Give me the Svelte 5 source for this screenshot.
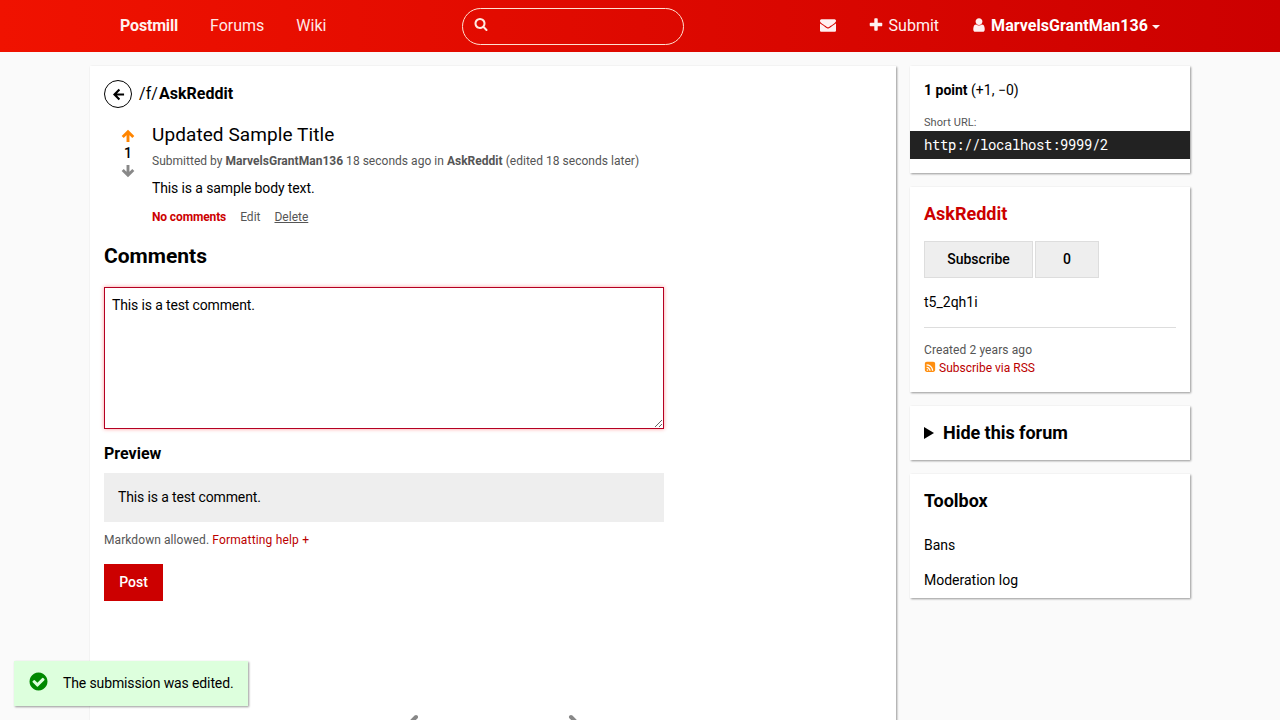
<script>
  const paths = {
    envelope: 'M1792 710v794q0 66-47 113t-113 47h-1472q-66 0-113-47t-47-113v-794q44 49 101 87 362 246 497 345 57 42 92.5 65.5t94.5 48 110 24.5h2q51 0 110-24.5t94.5-48 92.5-65.5q170-123 498-345 57-39 100-87zm0-294q0 79-49 151t-122 123q-376 261-468 325-10 7-42.5 31t-54 38.5-52 32.5-57.5 27-50 9h-2q-23 0-50-9t-57.5-27-52-32.5-54-38.5-42.5-31q-91-64-262-182.5t-205-142.5q-62-42-117-115.5t-55-136.5q0-78 41.5-130t118.5-52h1472q65 0 112.5 47t47.5 113z',
    plus: 'M1600 736v192q0 40-28 68t-68 28h-416v416q0 40-28 68t-68 28h-192q-40 0-68-28t-28-68v-416h-416q-40 0-68-28t-28-68v-192q0-40 28-68t68-28h416v-416q0-40 28-68t68-28h192q40 0 68 28t28 68v416h416q40 0 68 28t28 68z',
    user: 'M1536 1399q0 109-62.5 187t-150.5 78h-854q-88 0-150.5-78t-62.5-187q0-85 8.5-160.5t31.5-152 58.5-131 94-89 134.5-34.5q131 128 313 128t313-128q76 0 134.5 34.5t94 89 58.5 131 31.5 152 8.5 160.5zm-256-887q0 159-112.5 271.5t-271.5 112.5-271.5-112.5-112.5-271.5 112.5-271.5 271.5-112.5 271.5 112.5 112.5 271.5z',
    search: 'M1216 832q0-185-131.5-316.5t-316.5-131.5-316.5 131.5-131.5 316.5 131.5 316.5 316.5 131.5 316.5-131.5 131.5-316.5zm512 832q0 52-38 90t-90 38q-54 0-90-38l-343-342q-179 124-399 124-143 0-273.5-55.5t-225-150-150-225-55.5-273.5 55.5-273.5 150-225 225-150 273.5-55.5 273.5 55.5 225 150 150 225 55.5 273.5q0 220-124 399l343 343q37 37 37 90z',
    check: 'M1412 734q0-28-18-46l-91-90q-19-19-45-19t-45 19l-408 407-226-226q-19-19-45-19t-45 19l-91 90q-18 18-18 46 0 27 18 45l362 362q19 19 45 19 27 0 46-19l543-543q18-18 18-45zm252 162q0 209-103 385.5t-279.5 279.5-385.5 103-385.5-103-279.5-279.5-103-385.5 103-385.5 279.5-279.5 385.5-103 385.5 103 279.5 279.5 103 385.5z',
    rss: 'M640 1344q0-53-37.5-90.5t-90.5-37.5-90.5 37.5-37.5 90.5 37.5 90.5 90.5 37.5 90.5-37.5 37.5-90.5zm351 94q-13-232-177-396t-396-177q-14-1-24 9t-10 23v128q0 13 8.5 22t21.5 10q154 11 264 121t121 264q1 13 10 21.5t22 8.5h128q13 0 23-10t9-24zm384 1q-5-154-56-297.5t-139.5-260-205-205-260-139.5-297.5-56q-14-1-23 9-10 10-10 23v128q0 13 9 22t22 10q204 7 378 111.5t278.5 278.5 111.5 378q1 13 10 22t22 9h128q13 0 23-10 11-9 9-23zm289-1055v960q0 119-84.5 203.5t-203.5 84.5h-960q-119 0-203.5-84.5t-84.5-203.5v-960q0-119 84.5-203.5t203.5-84.5h960q119 0 203.5 84.5t84.5 203.5z'
  };
  let comment = $state('This is a test comment.');
</script>

{#snippet icon(name)}
  <svg class="icon {name}" viewBox="0 0 1792 1792" aria-hidden="true"><path d={paths[name]} /></svg>
{/snippet}

{#snippet arrow(dir)}
  <svg class="arrow {dir}" viewBox="0 0 14 14" aria-hidden="true">
    <path d="M7 13V3M1.7 8L7 2.7L12.3 8" />
  </svg>
{/snippet}

<div class="page">
  <header>
    <nav class="left">
      <a class="brand" href="#home">Postmill</a>
      <a href="#forums">Forums</a>
      <a href="#wiki">Wiki</a>
    </nav>
    <div class="search-box">{@render icon('search')}</div>
    <nav class="right">
      <a href="#messages" aria-label="Messages">{@render icon('envelope')}</a>
      <a class="submit" href="#submit">{@render icon('plus')}Submit</a>
      <a class="account" href="#account">{@render icon('user')}<b>MarvelsGrantMan136</b><i class="caret"></i></a>
    </nav>
  </header>

  <div class="columns">
    <main class="card">
      <div class="crumb">
        <a class="back" href="#back" aria-label="Back">{@render arrow('west')}</a>
        <span>/f/<b>AskReddit</b></span>
      </div>

      <article>
        <div class="vote">
          {@render arrow('up')}
          <span>1</span>
          {@render arrow('down')}
        </div>
        <div class="submission">
          <h1>Updated Sample Title</h1>
          <p class="meta">Submitted by <b>MarvelsGrantMan136</b> 18 seconds ago in <b>AskReddit</b> (edited 18 seconds later)</p>
          <p class="body">This is a sample body text.</p>
          <div class="actions"><b>No comments</b><span>Edit</span><u>Delete</u></div>
        </div>
      </article>

      <h2>Comments</h2>
      <textarea bind:value={comment}></textarea>
      <h3>Preview</h3>
      <div class="preview">{comment}</div>
      <p class="help">Markdown allowed. <a href="#help">Formatting help +</a></p>
      <button class="post">Post</button>

      <svg class="empty" width="180" height="40" viewBox="0 0 180 40" aria-hidden="true">
        <path d="M14 4L1 17L14 30M169 4L182 17" />
      </svg>
    </main>

    <aside>
      <section class="card stats">
        <p class="points"><b>1 point</b> (+1, −0)</p>
        <p class="label">Short URL:</p>
        <div class="url">http://localhost:9999/2</div>
      </section>

      <section class="card forum">
        <h4 class="red">AskReddit</h4>
        <div class="subscribe"><button>Subscribe</button><span>0</span></div>
        <p class="desc">t5_2qh1i</p>
        <p class="created">Created 2 years ago</p>
        <a class="feed" href="#rss">{@render icon('rss')}Subscribe via RSS</a>
      </section>

      <section class="card hide">
        <h4><i class="marker"></i>Hide this forum</h4>
      </section>

      <section class="card toolbox">
        <h4>Toolbox</h4>
        <a href="#bans">Bans</a>
        <a href="#log">Moderation log</a>
      </section>
    </aside>
  </div>

  <div class="alert" role="status">{@render icon('check')}<span>The submission was edited.</span></div>
</div>

<style>
  :global(body) { margin: 0; background: #fafafa; }
  * { box-sizing: border-box; }
  .page {
    height: 720px;
    overflow: hidden;
    display: flex;
    flex-direction: column;
    font: 14px/21px Roboto, sans-serif;
    color: #000;
  }
  a { color: inherit; text-decoration: none; }
  p, h1, h2, h3, h4 { margin: 0; }
  .icon { display: block; width: 16px; height: 16px; fill: currentColor; flex: none; }
  .arrow {
    display: block;
    width: 14px;
    height: 14px;
    fill: none;
    stroke: currentColor;
    stroke-width: 2.9;
    flex: none;
  }

  header {
    height: 52px;
    flex: none;
    padding: 0 120px;
    display: grid;
    grid-template-columns: 342px 222px 1fr;
    align-items: center;
    background: linear-gradient(to right, #f01200, #c00);
    color: #fff;
    font-size: 16px;
  }
  header nav { display: flex; gap: 32px; color: #ffe8e6; padding-bottom: 2px; }
  header a { display: flex; align-items: center; }
  .brand { font-weight: 700; letter-spacing: -.18px; color: #fff0ee; }
  nav.right { justify-content: flex-end; gap: 32px; color: #fff0f0; }
  .submit .icon { margin: 0 5px 0 0; }
  .account .icon { margin-right: 4px; }
  .account b { letter-spacing: .04px; color: #fff; }
  .caret {
    margin: 3px 0 0 4px;
    border: 4px solid transparent;
    border-top-color: currentColor;
    border-bottom: 0;
  }
  .search-box {
    height: 37px;
    margin-top: 1px;
    border: 1px solid #ffe0d0;
    border-radius: 19px;
    padding: 8px 11px;
    color: #ffeae0;
  }
  .search-box .icon { width: 14px; height: 14px; }

  .columns {
    flex: 1;
    min-height: 0;
    display: grid;
    grid-template-columns: 806px 280px;
    gap: 14px;
    padding: 14px 90px 0;
  }
  .card { background: #fff; box-shadow: 1px 1px 2px rgba(0, 0, 0, .4); }
  main { height: 700px; padding: 14px; }
  .crumb { display: flex; align-items: center; gap: 7px; height: 28px; font-size: 16px; letter-spacing: .09px; }
  .crumb span { padding-bottom: 2px; }
  .crumb b { margin-left: 1px; letter-spacing: 0; }
  .back {
    width: 28px;
    height: 28px;
    border: 1px solid #000;
    border-radius: 50%;
    display: grid;
    place-items: center;
  }
  .west { width: 13px; height: 13px; transform: rotate(-90deg); stroke-width: 2.3; }
  article { display: flex; margin-top: 14px; }
  .vote {
    width: 48px;
    display: flex;
    flex-direction: column;
    align-items: center;
    padding-top: 7px;
    font-weight: 500;
    line-height: 20px;
  }
  .up { color: #ff8500; }
  .down { color: #888; margin-top: 1px; transform: rotate(180deg); }
  h1 { font-size: 19px; line-height: 25px; font-weight: 400; letter-spacing: .09px; }
  .meta { font-size: 12px; line-height: 18px; color: #555; margin-top: 5px; letter-spacing: .024px; }
  .body { margin-top: 8px; letter-spacing: -.12px; }
  .actions { display: flex; gap: 14px; margin-top: 9px; font-size: 12px; line-height: 18px; color: #555; }
  .actions b { color: #c00; letter-spacing: -.12px; }
  h2 { font-size: 21px; line-height: 28px; margin-top: 16px; }
  textarea {
    display: block;
    width: 560px;
    height: 142px;
    margin-top: 17px;
    padding: 7px;
    border: 1px solid #b50022;
    border-radius: 0;
    outline: 0;
    box-shadow: 0 0 4px rgba(255, 0, 0, .4);
    background: #fff;
    color: #000;
    font: inherit;
    letter-spacing: -.14px;
  }
  h3 { font-size: 16px; line-height: 24px; margin-top: 13px; }
  .preview { width: 560px; height: 49px; margin-top: 7px; padding: 14px; background: #eee; letter-spacing: -.14px; }
  .help { font-size: 12px; line-height: 18px; margin-top: 9px; color: #555; letter-spacing: .08px; }
  .help a { color: #b00; letter-spacing: .17px; }
  button { font: inherit; font-weight: 500; }
  .post {
    display: block;
    width: 59px;
    height: 37px;
    margin-top: 15px;
    padding: 0;
    border: 0;
    background: #c00;
    color: #fff;
  }
  .empty { display: block; margin: 112px 0 0 298px; fill: none; stroke: #888; stroke-width: 4; stroke-linecap: round; }

  aside { display: flex; flex-direction: column; gap: 14px; }
  aside .card { padding: 14px; }
  .stats { height: 107px; }
  .label { font-size: 11px; line-height: 17px; color: #555; margin-top: 13px; letter-spacing: .08px; }
  .url {
    height: 28px;
    margin: 0 -14px;
    padding: 0 14px;
    background: #222;
    color: #fff;
    font: 14px/28px "Roboto Mono", "Liberation Mono", monospace;
    letter-spacing: -.4px;
  }
  .forum { height: 205px; }
  h4 { font-size: 18px; line-height: 25px; font-weight: 700; display: flex; align-items: center; letter-spacing: -.04px; }
  .red { color: #c00; letter-spacing: 0; }
  .subscribe { display: flex; gap: 2px; margin-top: 15px; }
  .subscribe button, .subscribe span {
    width: 109px;
    height: 37px;
    padding: 0;
    border: 1px solid #ddd;
    background: #eee;
    color: #000;
    font-weight: 500;
    line-height: 35px;
    text-align: center;
  }
  .subscribe span { width: 64px; }
  .desc { padding: 14px 0; border-bottom: 1px solid #ddd; }
  .created { font-size: 12px; line-height: 18px; margin-top: 13px; color: #555; letter-spacing: .1px; }
  .feed { display: flex; align-items: center; gap: 3px; font-size: 12px; line-height: 18px; color: #b00; }
  .feed .icon { width: 12px; height: 12px; color: #ff8f10; margin-top: -2px; }
  .hide { height: 54px; }
  .marker {
    border: 6px solid transparent;
    border-left: 10px solid #000;
    border-right: 0;
    margin-right: 9px;
  }
  .toolbox { height: 124px; }
  .toolbox a { display: block; height: 35px; line-height: 35px; }
  .toolbox h4 { margin-bottom: 15px; }

  .alert {
    position: absolute;
    left: 14px;
    top: 661px;
    width: 234px;
    height: 45px;
    padding: 0 14px;
    display: flex;
    align-items: center;
    gap: 14px;
    background: #dfd;
    box-shadow: 1px 1px 2px rgba(0, 0, 0, .4);
    white-space: nowrap;
    letter-spacing: -.12px;
  }
  .alert .icon { width: 21px; height: 21px; color: #080; margin-top: -4px; }
</style>
